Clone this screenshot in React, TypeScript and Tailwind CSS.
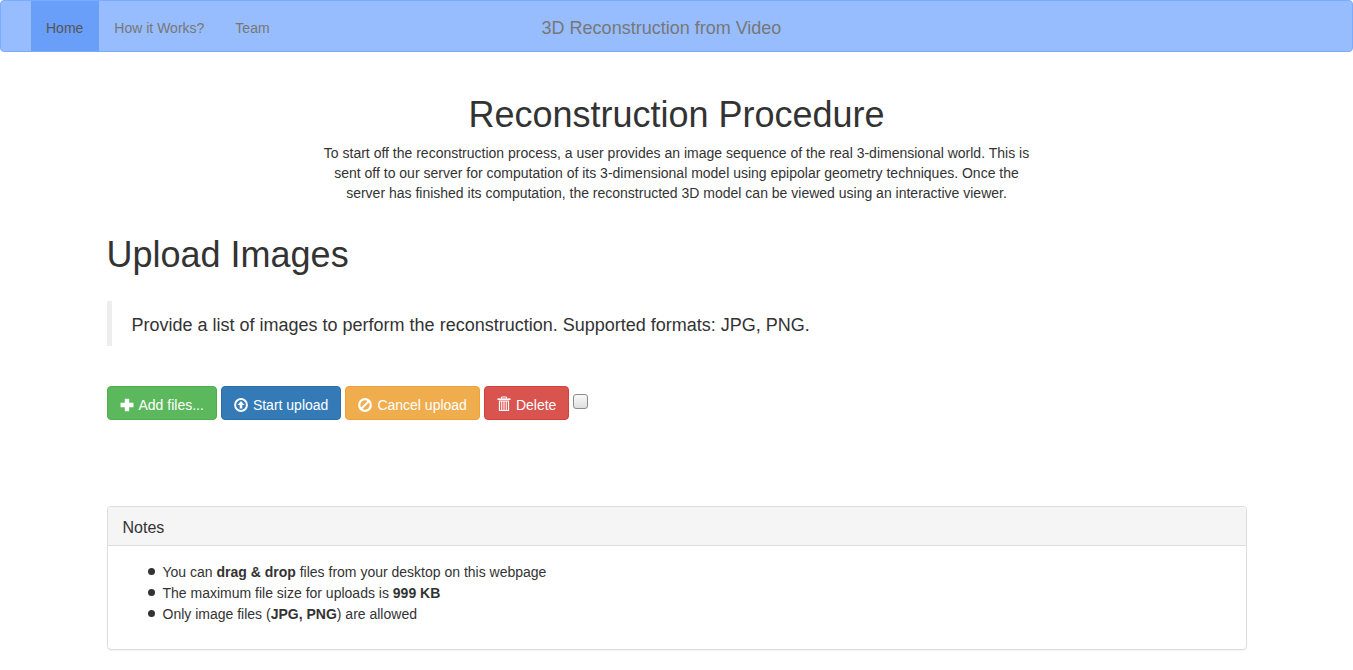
import type { ReactNode } from "react";

const buttonBase =
  "flex h-[34px] items-center gap-[5px] rounded border px-3 pt-1 text-sm leading-5 text-white";

const navLink = "pt-[17px] pr-4 pb-[13px] pl-[15px]";

function PlusIcon() {
  return (
    <svg viewBox="0 0 14 14" className="size-3.5" fill="currentColor" aria-hidden="true">
      <path d="M4.8 1.2Q4.8 .7 5.3 .7H8.7Q9.2 .7 9.2 1.2V4.8H13Q13.5 4.8 13.5 5.3V8.7Q13.5 9.2 13 9.2H9.2V12.8Q9.2 13.3 8.7 13.3H5.3Q4.8 13.3 4.8 12.8V9.2H1Q.5 9.2 .5 8.7V5.3Q.5 4.8 1 4.8H4.8Z" />
    </svg>
  );
}

function UploadIcon() {
  return (
    <svg viewBox="0 0 14 14" className="size-3.5" aria-hidden="true">
      <circle cx="7" cy="7" r="5.9" fill="none" stroke="currentColor" strokeWidth="2" />
      <path d="M7 3L10.5 7H8.3V10.5H5.7V7H3.5Z" fill="currentColor" />
    </svg>
  );
}

function BanIcon() {
  return (
    <svg viewBox="0 0 14 14" className="size-3.5" fill="none" stroke="currentColor" aria-hidden="true">
      <circle cx="7" cy="7" r="5.8" strokeWidth="2.2" />
      <path d="M3 11L11 3" strokeWidth="2.2" />
    </svg>
  );
}

function TrashIcon() {
  return (
    <svg viewBox="0 0 14 16" className="mb-[2px] h-4 w-3.5" fill="none" stroke="currentColor" aria-hidden="true">
      <path d="M4.5 2.5V1H9.5V2.5" strokeWidth="1" />
      <path d="M.5 3.2H13.5" strokeWidth="1.6" />
      <path d="M2.5 5H11.5V14.5H2.5Z" strokeWidth="1.2" />
      <path d="M4.75 5V14.5M7 5V14.5M9.25 5V14.5" strokeWidth="1.1" />
    </svg>
  );
}

function Note({ children }: { children: ReactNode }) {
  return (
    <li className="flex items-start gap-2 leading-[21px] before:mt-[6px] before:size-[7px] before:rounded-full before:bg-[#333]">
      <span>{children}</span>
    </li>
  );
}

export default function App() {
  return (
    <div className="bg-white font-['Liberation_Sans',Arial,sans-serif] text-sm leading-5 text-[#333]">
      <nav className="grid grid-cols-[1fr_auto_1fr] rounded border border-[#7aabff] bg-[#98bdfe] pr-[60px] pl-[30px] text-[#777]">
        <div className="flex">
          <a href="#home" className={`${navLink} bg-[#6a9ff9] text-[#555]`}>Home</a>
          <a href="#how" className={navLink}>How it Works?</a>
          <a href="#team" className={navLink}>Team</a>
        </div>
        <a href="#home" className="pt-[17px] pb-[13px] text-lg leading-5">3D Reconstruction from Video</a>
      </nav>

      <main className="mx-auto max-w-[1170px] px-[15px]">
        <header className="mx-auto mt-[43px] max-w-[725px] text-center">
          <h1 className="text-4xl leading-10">Reconstruction Procedure</h1>
          <p className="mt-2">
            To start off the reconstruction process, a user provides an image sequence of the real
            3-dimensional world. This is sent off to our server for computation of its 3-dimensional
            model using epipolar geometry techniques. Once the server has finished its computation,
            the reconstructed 3D model can be viewed using an interactive viewer.
          </p>
        </header>

        <h1 className="mt-8 text-4xl leading-10">Upload Images</h1>
        <blockquote className="mt-[26px] border-l-[5px] border-[#eee] px-5 pt-3 pb-2 text-lg leading-[25px]">
          Provide a list of images to perform the reconstruction. Supported formats: JPG, PNG.
        </blockquote>

        <form className="mt-10 flex flex-wrap gap-1">
          <button type="button" className={`${buttonBase} border-[#4cae4c] bg-[#5cb85c]`}>
            <PlusIcon />
            Add files...
          </button>
          <button type="button" className={`${buttonBase} border-[#2e6da4] bg-[#337ab7]`}>
            <UploadIcon />
            Start upload
          </button>
          <button type="button" className={`${buttonBase} border-[#eea236] bg-[#f0ad4e]`}>
            <BanIcon />
            Cancel upload
          </button>
          <button type="button" className={`${buttonBase} border-[#d43f3a] bg-[#d9534f]`}>
            <TrashIcon />
            Delete
          </button>
          <input
            type="checkbox"
            aria-label="Select all files"
            className="mt-2 size-[15px] appearance-none rounded-[3px] border border-[#8b8b8b] bg-linear-to-b from-[#fafafa] to-[#dedede] checked:bg-[#337ab7]"
          />
        </form>

        <section className="mt-[86px] mb-5 rounded border border-[#ddd] shadow-[0_1px_1px_rgba(0,0,0,0.05)]">
          <h3 className="rounded-t-[3px] border-b border-[#ddd] bg-[#f5f5f5] px-[15px] pt-3 pb-2 text-base leading-[18px]">
            Notes
          </h3>
          <ul className="pt-4 pr-[15px] pb-6 pl-10">
            <Note>
              You can <strong>drag &amp; drop</strong> files from your desktop on this webpage
            </Note>
            <Note>
              The maximum file size for uploads is <strong>999 KB</strong>
            </Note>
            <Note>
              Only image files (<strong>JPG, PNG</strong>) are allowed
            </Note>
          </ul>
        </section>
      </main>
    </div>
  );
}
